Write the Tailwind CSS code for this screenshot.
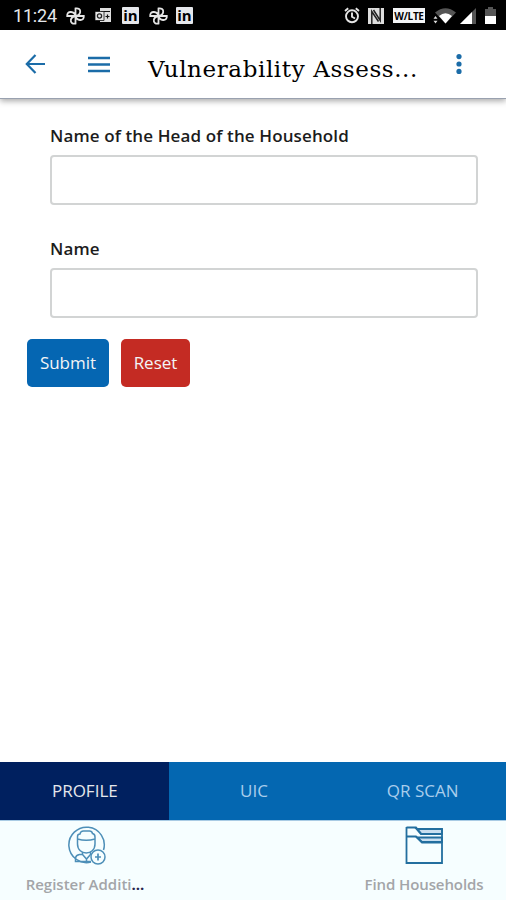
<!DOCTYPE html>
<html lang="en">
<head>
    <meta charset="UTF-8">
    <meta name="viewport" content="width=device-width, initial-scale=1.0">
    <title>Vulnerability Assessment</title>
    <script src="https://cdn.jsdelivr.net/npm/@tailwindcss/browser@4"></script>
</head>
<body class="flex flex-col h-[900px] overflow-hidden bg-white font-['Open_Sans','Noto_Sans',sans-serif] text-black">
    <!-- Status bar -->
    <div class="flex items-center justify-between h-[30px] shrink-0 bg-black pl-[13px] pr-[11px] text-white">
        <div class="flex items-center h-full pt-px">
            <span class="w-[53px] whitespace-nowrap font-[Roboto,sans-serif] text-[18px] leading-none tracking-[-0.2px] text-gray-200">11:24</span>
            <svg class="w-[19px] h-[18px] mr-[10px]" viewBox="0 0 19 18" fill="none" stroke="#e5e5e5" stroke-width="1.8">
                <path d="M9.5 9V1.500C12.500 1 14.500 2.500 14.200 4.800C14 7 12 8.500 9.500 9ZM9.500 9H17.800C18 11.800 16.500 13.200 14 13C11.500 12.800 10 11.500 9.500 9ZM9.500 9V16.500C6.500 17 4.500 15.500 4.800 13.200C5 11 7 9.500 9.500 9ZM9.500 9H1.200C1 6.200 2.500 4.800 5 5C7.500 5.200 9 6.500 9.500 9Z"/>
            </svg>
            <svg class="w-[17px] h-[16px] mr-[10px]" viewBox="0 0 17 16">
                <path d="M5 0h11v14H5z" fill="#dedede"/>
                <path d="M6 3.500h9M10.500 8.500h4M12.500 6.500v4" stroke="#111" stroke-width="1.200"/>
                <path d="M0 3.500h9v9H0z" fill="#e8e8e8" stroke="#111" stroke-width=".8"/>
                <circle cx="4.500" cy="8" r="2.100" fill="none" stroke="#222" stroke-width="1.300"/>
            </svg>
            <span class="flex justify-center w-[17px] h-[17px] mr-[10px] rounded-[1px] bg-gray-200 text-black text-[15px] leading-[17px] font-bold">in</span>
            <svg class="w-[19px] h-[18px] mr-[8px]" viewBox="0 0 19 18" fill="none" stroke="#e5e5e5" stroke-width="1.8">
                <path d="M9.5 9V1.500C12.500 1 14.500 2.500 14.200 4.800C14 7 12 8.500 9.500 9ZM9.500 9H17.800C18 11.800 16.500 13.200 14 13C11.500 12.800 10 11.500 9.500 9ZM9.500 9V16.500C6.500 17 4.500 15.500 4.800 13.200C5 11 7 9.500 9.500 9ZM9.500 9H1.200C1 6.200 2.500 4.800 5 5C7.500 5.200 9 6.500 9.500 9Z"/>
            </svg>
            <span class="flex justify-center w-[17px] h-[17px] rounded-[1px] bg-gray-200 text-black text-[15px] leading-[17px] font-bold">in</span>
        </div>
        <div class="flex items-center h-full pt-px -mr-px">
            <svg class="w-[16px] h-[17px] mr-[8px]" viewBox="0 0 16 17" fill="none" stroke="#e5e5e5" stroke-width="1.900">
                <circle cx="8" cy="9.300" r="6"/>
                <path d="M8 5.500v4.300l3 1.700M1 4l3.200-2.700M15 4l-3.200-2.700"/>
            </svg>
            <svg class="w-[16px] h-[16px] mr-[9px]" viewBox="0 0 16 16">
                <path d="M0 0h16v16H0z" fill="#dedede"/>
                <path d="M3.800 16V3.500L10.500 13.500M5.500 2L12.200 12.500V0" fill="none" stroke="#222" stroke-width="1.500"/>
            </svg>
            <span class="flex items-center justify-center w-[32px] h-[15px] mr-[8px] bg-gray-100 text-black text-[10px] leading-none font-bold tracking-[-0.3px]">W/LTE</span>
            <svg class="w-[23px] h-[16px] mr-[4px]" viewBox="0 0 23 16">
                <path d="M2 4.500Q12.500-4 23 4.500L12.500 15.500z" fill="#555"/>
                <path d="M6 8Q12.500 2.500 19 8L12.500 15.500z" fill="#fff"/>
                <path d="M2.500 8l2 2.700H.5zM2.500 15.500l2-2.700H.5z" fill="#ddd"/>
            </svg>
            <svg class="w-[16px] h-[16px] mr-[9px]" viewBox="0 0 16 16">
                <path d="M16 0v16H0z" fill="#555"/>
                <path d="M12 4v12H0z" fill="#fff"/>
            </svg>
            <svg class="w-[11px] h-[17px]" viewBox="0 0 11 17">
                <path d="M3 0h5v2h3v7H0V2h3z" fill="#555"/>
                <path d="M0 9h11v8H0z" fill="#fff"/>
            </svg>
        </div>
    </div>

    <!-- App bar -->
    <header class="flex items-center h-[69px] shrink-0 pl-[25px] pr-[44px] border-b border-gray-400 shadow-[0_2px_6px_rgba(0,0,0,0.35)]">
        <svg class="w-[21px] h-[20px] mr-[42px]" viewBox="0 0 21 20" fill="none" stroke="#1b6ca8" stroke-width="2.200">
            <path d="M20 10H2M10.500 1L1.800 10l8.700 9"/>
        </svg>
        <svg class="w-[22px] h-[17px]" viewBox="0 0 22 17" stroke="#1b6ca8" stroke-width="2.400">
            <path d="M0 2h22M0 8.500h22M0 15h22"/>
        </svg>
        <h1 class="flex-1 pl-[38px] pt-[9px] whitespace-nowrap font-['DejaVu_Serif',serif] text-[23px] leading-[30px] tracking-[0.6px]">Vulnerability Assess...</h1>
        <svg class="w-[6px] h-[20px]" viewBox="0 0 6 20" fill="#1b6ca8">
            <circle cx="3" cy="2.600" r="2.600"/>
            <circle cx="3" cy="10" r="2.600"/>
            <circle cx="3" cy="17.400" r="2.600"/>
        </svg>
    </header>

    <!-- Form -->
    <main class="flex-1 pt-[25px]">
        <div class="pl-[50px] pr-[28px]">
            <label class="block h-[31px] text-[17px] leading-[24px] font-semibold tracking-[0.12px] text-[#1c1c1c]" for="head">Name of the Head of the Household</label>
            <input id="head" type="text" class="block w-full h-[50px] rounded-[4px] border-2 border-[#d2d4d4]">
            <label class="block h-[31px] mt-[32px] text-[17px] leading-[24px] font-semibold tracking-[0.12px] text-[#1c1c1c]" for="name">Name</label>
            <input id="name" type="text" class="block w-full h-[50px] rounded-[4px] border-2 border-[#d2d4d4]">
        </div>
        <div class="flex gap-3 pl-[27px] mt-[21px]">
            <button class="w-[82px] h-12 rounded-[5px] bg-[#0566b2] text-[17px] text-gray-100">Submit</button>
            <button class="w-[69px] h-12 rounded-[5px] bg-[#c42b23] text-[17px] text-gray-100">Reset</button>
        </div>
    </main>

    <!-- Tabs -->
    <div class="grid grid-cols-3 h-[58px] shrink-0 bg-[#0467b1] text-[17px] text-[#a9cdec]">
        <div class="flex items-center justify-center pl-px bg-[#00205f] text-gray-200">PROFILE</div>
        <div class="flex items-center justify-center pl-[2px]">UIC</div>
        <div class="flex items-center justify-center pl-[2px]">QR SCAN</div>
    </div>

    <!-- Bottom navigation -->
    <nav class="flex justify-between h-[80px] shrink-0 border-t border-[#a9cbe4] bg-[#f6feff] pl-[25px] pr-[23px] pt-[5px] text-[15px] leading-[20px] font-semibold text-[#a3a5a8]">
        <div class="flex flex-col items-center w-[120px]">
            <svg class="w-[39px] h-[39px] ml-[2px] mb-[9px]" viewBox="0 0 39 39" fill="none" stroke="#4d8fb8" stroke-width="1.500">
                <path d="M24 36A17.700 17.700 0 1 1 36.500 24"/>
                <path d="M10.500 13V10.500Q10.500 8 13 8Q13.500 5 16.500 5h6Q25 5 25.500 7.500Q28 8 28 11v7c0 12-17.500 12-17.500 0zM10.500 13q8.700 2.500 17.500 0"/>
                <path d="M15.500 26v2.500l4 4.500L23.500 28.500V26M15.500 28.500H12.500Q9 29 8.500 32v3.500H24M19.500 33v2.500"/>
                <circle cx="31" cy="31" r="7" fill="#f6feff"/>
                <path d="M31 27.500v7M28 31h6" stroke-width="1.700"/>
            </svg>
            <span class="whitespace-nowrap">Register Additi<span class="font-bold text-[#26264e]">...</span></span>
        </div>
        <div class="flex flex-col items-center w-[118px]">
            <svg class="w-[39px] h-[39px] mb-[9px]" viewBox="0 0 39 39" fill="none" stroke="#236f9f" stroke-width="1.800">
                <path d="M11.500 3H37V8H16zM12 11.500h25V16H17z" fill="#c9dff0"/>
                <path d="M1.500 1.500H11L16.500 8H37M1.500 10.500H11L17 16.500H37M37 2.500V37H1.500V1"/>
            </svg>
            <span class="whitespace-nowrap tracking-[-0.1px]">Find Households</span>
        </div>
    </nav>
</body>
</html>
